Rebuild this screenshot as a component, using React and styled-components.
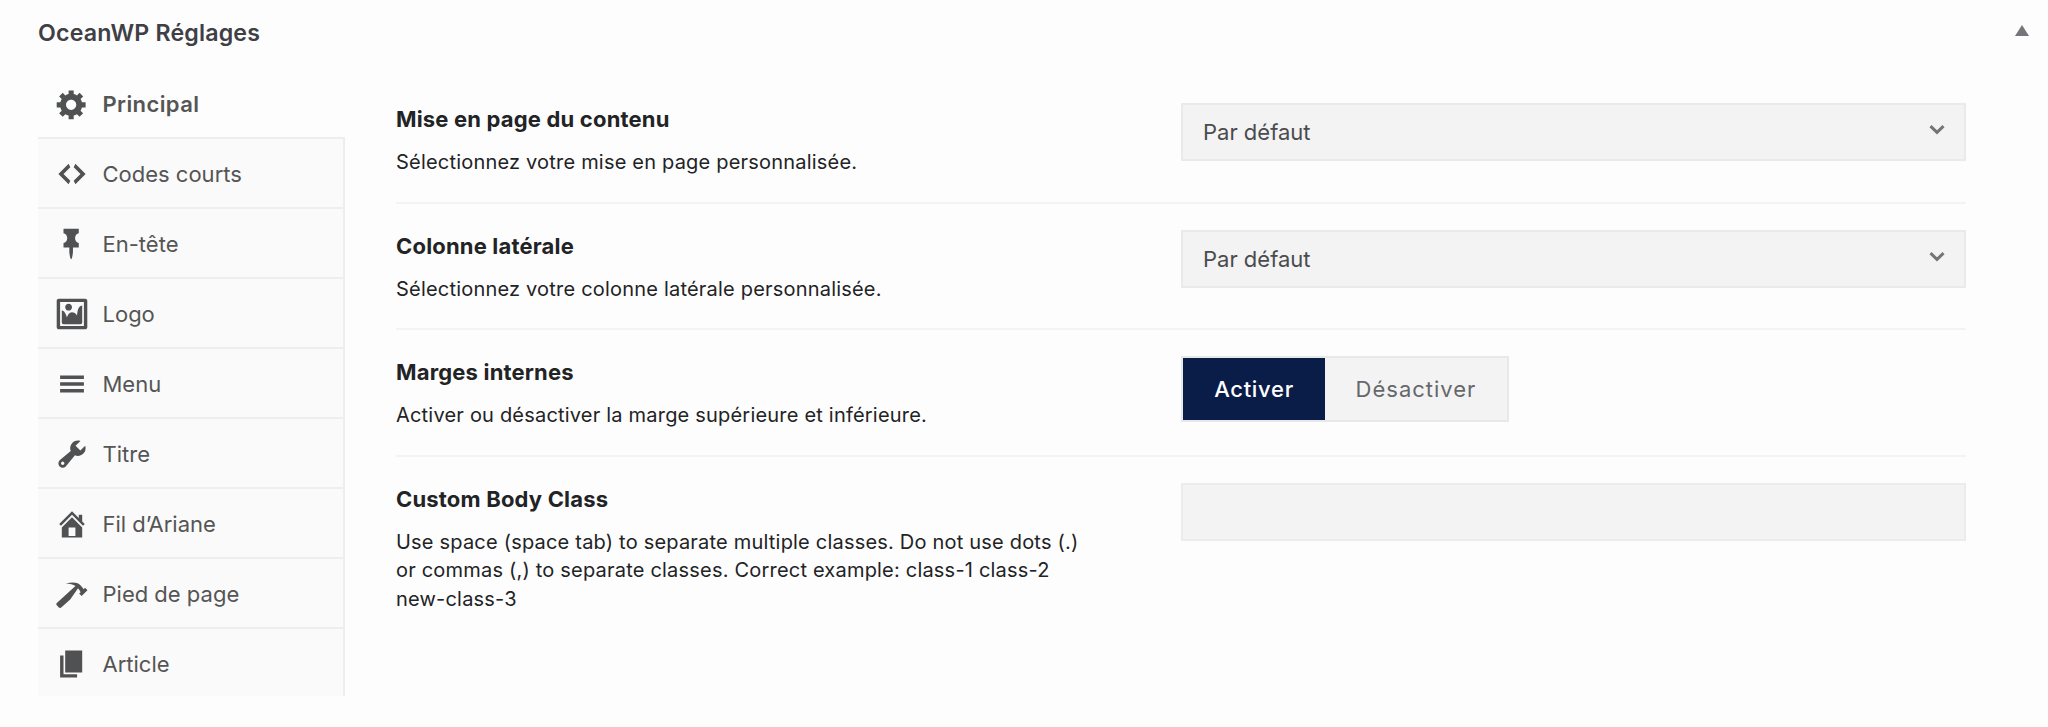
import React, { useState } from 'react';
import styled, { createGlobalStyle } from 'styled-components';

const GlobalStyle = createGlobalStyle`
  * {
    box-sizing: border-box;
  }

  body {
    margin: 0;
    background: #fdfdfd;
    font-family: Inter, "Liberation Sans", sans-serif;
    color: #222325;
  }
`;

const MetaBox = styled.section`
  height: 727px;
  overflow: hidden;
`;

const Header = styled.header`
  display: flex;
  align-items: center;
  justify-content: space-between;
  height: 68px;
  padding: 0 19px 4px 38px;
`;

const Heading = styled.h2`
  margin: 1px 0 0;
  font-size: 23.2px;
  font-weight: 600;
  letter-spacing: 0.17px;
  color: #3f4045;
`;

const Collapse = styled.button`
  display: flex;
  padding: 0 0 3px;
  border: none;
  background: none;
  color: #757679;
`;

const Panel = styled.div`
  display: flex;
  align-items: flex-start;
`;

const Tabs = styled.nav`
  width: 307px;
  margin: 1px 0 0 38px;
`;

const Tab = styled.button`
  display: flex;
  align-items: center;
  gap: 14px;
  width: 100%;
  height: ${props => (props.$last ? 67 : 70)}px;
  padding: ${props => (props.$last ? 2 : 1)}px 0 0 16.5px;
  border: solid #eeeeef;
  border-width: 0 ${props => (props.$active ? 0 : 2)}px ${props => (props.$last ? 0 : 2)}px 0;
  background: ${props => (props.$active ? 'transparent' : '#fafafa')};
  color: #555;
  font-family: inherit;
  font-size: 22px;
  font-weight: ${props => (props.$active ? 600 : 400)};
  letter-spacing: ${props => (props.$active ? 0.4 : 0)}px;
  text-align: left;
`;

const TabIcon = styled.svg`
  flex: none;
  width: 34px;
  height: 34px;
  fill: #505153;
`;

const Fields = styled.div`
  width: 1570px;
  margin-left: 51px;
  padding-top: 9px;
`;

const Field = styled.div`
  display: flex;
  height: 126.5px;
  padding-top: 26px;
  border-bottom: ${props => (props.$last ? 'none' : '2px solid #f3f3f4')};
`;

const FieldText = styled.div`
  width: 785px;
  padding-right: 90px;
`;

const Label = styled.h3`
  margin: 2px 0 15px;
  font-size: 22px;
  font-weight: 700;
  line-height: 28px;
  letter-spacing: 0.18px;
`;

const Description = styled.p`
  margin: 0;
  font-size: 20px;
  line-height: 28.7px;
  letter-spacing: 0.2px;
`;

const Select = styled.button`
  display: flex;
  align-items: center;
  justify-content: space-between;
  width: 785px;
  height: 58px;
  padding: 0 19px 0 20px;
  border: 2px solid #eaeaeb;
  background: #f3f3f3;
  color: #4a4b4e;
  font-family: inherit;
  font-size: 22px;
`;

const Chevron = styled.svg`
  width: 16px;
  height: 10px;
  margin-bottom: 4px;
  fill: none;
  stroke: #747578;
  stroke-width: 3;
`;

const Toggle = styled.div`
  display: flex;
  height: 66px;
  border: 2px solid #e7e8ea;
  background: #f3f3f3;
`;

const ToggleOption = styled.button`
  width: ${props => props.$width}px;
  padding: 0;
  border: none;
  background: ${props => (props.$on ? '#0a1c48' : 'transparent')};
  color: ${props => (props.$on ? '#fff' : '#66676a')};
  font-family: inherit;
  font-size: 22px;
  font-weight: ${props => (props.$on ? 500 : 400)};
  letter-spacing: ${props => (props.$on ? 0.7 : 1)}px;
`;

const TextInput = styled.input`
  width: 785px;
  height: 58px;
  padding: 0 20px;
  border: 2px solid #ececec;
  background: #f3f3f3;
  font-family: inherit;
  font-size: 22px;
  outline: none;
`;

const tabs = [
  {
    name: 'Principal',
    icon: 'M18 12h-2.18c-.17.7-.44 1.35-.81 1.93l1.54 1.54-2.1 2.1-1.54-1.54c-.58.36-1.23.63-1.91.79V19H8v-2.18c-.68-.16-1.33-.43-1.91-.79l-1.54 1.54-2.12-2.12 1.54-1.54c-.36-.58-.63-1.23-.79-1.91H1V9.03h2.17c.16-.7.44-1.35.8-1.94L2.43 5.55l2.1-2.1 1.54 1.54c.58-.37 1.24-.64 1.93-.81V2h3v2.18c.68.16 1.33.43 1.91.79l1.54-1.54 2.12 2.12-1.54 1.54c.36.59.64 1.24.8 1.94H18V12zm-8.5 1.5c1.66 0 3-1.34 3-3s-1.34-3-3-3-3 1.34-3 3 1.34 3 3 3z',
  },
  {
    name: 'Codes courts',
    icon: 'M9 6l-4 4 4 4-1 2-6-6 6-6zm2 8l4-4-4-4 1-2 6 6-6 6z',
  },
  {
    name: 'En-tête',
    icon: 'M5 3.61V1.04l8.99-.01-.01 2.58c-1.22.26-2.16 1.35-2.16 2.67v.5c.01 1.31.93 2.4 2.17 2.66l-.01 2.58h-3.41l-.01 2.57c0 .6-.47 4.41-1.06 4.41-.6 0-1.08-3.81-1.08-4.41v-2.56L5 12.02l.01-2.58c1.23-.25 2.15-1.35 2.15-2.66v-.5c0-1.31-.92-2.41-2.16-2.67z',
  },
  {
    name: 'Logo',
    icon: 'M2.25 1h15.5c.69 0 1.25.56 1.25 1.25v15.5c0 .69-.56 1.25-1.25 1.25H2.25C1.56 19 1 18.44 1 17.75V2.25C1 1.56 1.56 1 2.25 1zM17 17V3H3v14h14zM10 6c0-1.1-.9-2-2-2s-2 .9-2 2 .9 2 2 2 2-.9 2-2zm3 5s0-6 3-6v10c0 .55-.45 1-1 1H5c-.55 0-1-.45-1-1V8c2 0 3 4 3 4s1-3 3-3 3 2 3 2z',
  },
  {
    name: 'Menu',
    icon: 'M17 7V5H3v2h14zm0 4V9H3v2h14zm0 4v-2H3v2h14z',
  },
  {
    name: 'Titre',
    icon: 'M16.68 9.77c-1.34 1.34-3.3 1.67-4.95.99l-5.41 6.52c-.99.99-2.59.99-3.58 0s-.99-2.59 0-3.57l6.52-5.42c-.68-1.65-.35-3.61.99-4.95 1.28-1.28 3.12-1.62 4.72-1.06l-2.89 2.89 2.82 2.82 2.86-2.87c.53 1.58.18 3.39-1.08 4.65zM3.81 16.21c.4.39 1.04.39 1.43 0 .4-.4.4-1.04 0-1.43-.39-.4-1.03-.4-1.43 0-.39.39-.39 1.03 0 1.43z',
  },
  {
    name: 'Fil d’Ariane',
    icon: 'M16 8.5l1.53 1.53-1.06 1.06L10 4.6l-6.47 6.49-1.06-1.06L10 2.5l4 4v-2h2v4zm-6-2.46l6 5.99V18H4v-5.97zM12 17v-5H8v5h4z',
  },
  {
    name: 'Pied de page',
    icon: 'M17.7 6.32l1.41 1.42-3.47 3.41-1.42-1.42.84-.82c-.32-.76-.81-1.57-1.51-2.31l-4.61 6.59-5.26 4.7c-.39.39-1.02.39-1.42 0l-1.2-1.21c-.39-.39-.39-1.02 0-1.41l10.97-9.92c-1.37-.86-3.21-1.46-5.67-1.48 2.7-.82 4.95-.93 6.58-.3 1.7.66 2.82 2.2 3.91 3.58z',
  },
  {
    name: 'Article',
    icon: 'M6 15V2h10v13H6zm-1 1h8v2H3V5h2v11z',
  },
];

const Dropdown = ({ value }) => (
  <Select type="button">
    <span>{value}</span>
    <Chevron viewBox="0 0 16 10">
      <path d="M1.5 1.2 8 7.4l6.5-6.2" />
    </Chevron>
  </Select>
);

const Setting = ({ label, description, last, children }) => (
  <Field $last={last}>
    <FieldText>
      <Label>{label}</Label>
      <Description>{description}</Description>
    </FieldText>
    {children}
  </Field>
);

export default () => {
  const [activeTab, setActiveTab] = useState('Principal');
  const [enabled, setEnabled] = useState(true);

  return (
    <MetaBox>
      <GlobalStyle />
      <Header>
        <Heading>OceanWP Réglages</Heading>
        <Collapse type="button" aria-label="Replier">
          <svg width="14" height="11" viewBox="0 0 14 11" fill="currentColor">
            <path d="M7 0l7 11H0z" />
          </svg>
        </Collapse>
      </Header>
      <Panel>
        <Tabs>
          {tabs.map(({ name, icon }, i) => (
            <Tab
              key={name}
              type="button"
              $active={name === activeTab}
              $last={i === tabs.length - 1}
              onClick={() => setActiveTab(name)}
            >
              <TabIcon viewBox="0 0 20 20"><path d={icon} /></TabIcon>
              <span>{name}</span>
            </Tab>
          ))}
        </Tabs>
        <Fields>
          <Setting
            label="Mise en page du contenu"
            description="Sélectionnez votre mise en page personnalisée."
          >
            <Dropdown value="Par défaut" />
          </Setting>
          <Setting
            label="Colonne latérale"
            description="Sélectionnez votre colonne latérale personnalisée."
          >
            <Dropdown value="Par défaut" />
          </Setting>
          <Setting
            label="Marges internes"
            description="Activer ou désactiver la marge supérieure et inférieure."
          >
            <Toggle>
              <ToggleOption type="button" $width={142} $on={enabled} onClick={() => setEnabled(true)}>
                Activer
              </ToggleOption>
              <ToggleOption type="button" $width={182} $on={!enabled} onClick={() => setEnabled(false)}>
                Désactiver
              </ToggleOption>
            </Toggle>
          </Setting>
          <Setting
            label="Custom Body Class"
            description="Use space (space tab) to separate multiple classes. Do not use dots (.) or commas (,) to separate classes. Correct example: class-1 class-2 new-class-3"
            last
          >
            <TextInput type="text" />
          </Setting>
        </Fields>
      </Panel>
    </MetaBox>
  );
};
